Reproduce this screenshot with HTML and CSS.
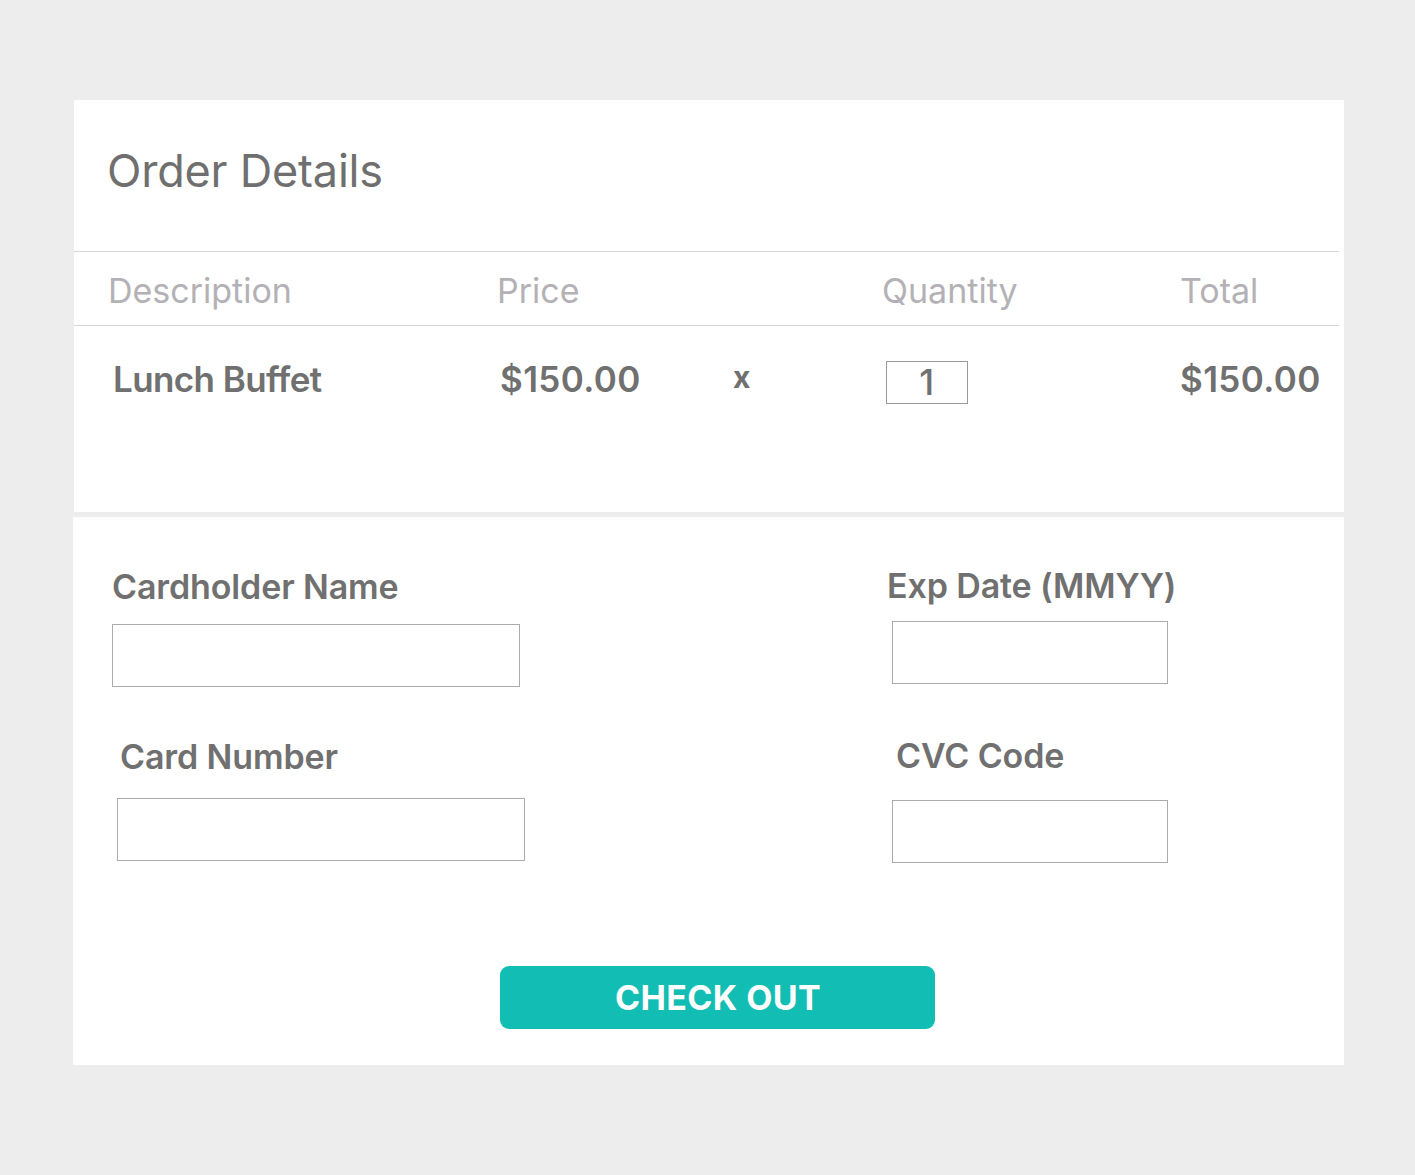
FILE: index.html
```html
<!DOCTYPE html>
<html lang="en">
<head>
<meta charset="utf-8">
<title>Order Details</title>
<link rel="stylesheet" href="styles.css">
</head>
<body>
<main class="page">
  <section class="card order">
    <div class="order-head">
      <h1 class="title">Order Details</h1>
    </div>
    <div class="table-head">
      <span class="th th-desc">Description</span>
      <span class="th th-price">Price</span>
      <span class="th th-qty">Quantity</span>
      <span class="th th-total">Total</span>
    </div>
    <div class="table-row">
      <span class="td td-desc">Lunch Buffet</span>
      <span class="td td-price">$150.00</span>
      <span class="td td-times">x</span>
      <span class="td td-qty"><span class="qty-box">1</span></span>
      <span class="td td-total">$150.00</span>
    </div>
  </section>
  <section class="card payment">
    <div class="form">
      <div class="field field-name">
        <label class="label">Cardholder Name</label>
        <div class="input"></div>
      </div>
      <div class="field field-exp">
        <label class="label">Exp Date (MMYY)</label>
        <div class="input input-short"></div>
      </div>
      <div class="field field-number">
        <label class="label">Card Number</label>
        <div class="input"></div>
      </div>
      <div class="field field-cvc">
        <label class="label">CVC Code</label>
        <div class="input input-short"></div>
      </div>
    </div>
    <button class="checkout" type="button">CHECK OUT</button>
  </section>
</main>
</body>
</html>
```

FILE: styles.css
```css
* { box-sizing: border-box; }

html, body {
  margin: 0;
  padding: 0;
  background: #ededed;
}

body {
  font-family: Inter, "Noto Sans", "Liberation Sans", sans-serif;
  color: #707070;
  width: 1415px;
  height: 1175px;
  overflow: hidden;
}

.page {
  padding-top: 100px;
  display: flex;
  flex-direction: column;
  gap: 5px;
}

.card {
  background: #ffffff;
}

.order {
  margin-left: 74px;
  width: 1270px;
  height: 412px;
}

.order-head {
  height: 152px;
  width: 1265px;
  border-bottom: 1px solid #d6d6d6;
  padding: 48px 0 0 33px;
}

.title {
  margin: 0;
  font-size: 45px;
  line-height: 46px;
  font-weight: 400;
  color: #6f6f6f;
  letter-spacing: -0.2px;
}

.table-head {
  width: 1265px;
  height: 74px;
  border-bottom: 1px solid #d6d6d6;
  padding-top: 22px;
  display: grid;
  grid-template-columns: 34px 389px 385px 298px 1fr;
}

.th {
  font-size: 34px;
  line-height: 34px;
  font-weight: 400;
  color: #b4b1b6;
}

.th-desc { grid-column: 2; }
.th-price { grid-column: 3; }
.th-qty { grid-column: 4; }
.th-total { grid-column: 5; }

.table-row {
  padding-top: 35px;
  display: grid;
  grid-template-columns: 39px 387px 233px 153px 294px 1fr;
  align-items: start;
}

.td {
  font-size: 35px;
  line-height: 36px;
  font-weight: 600;
  color: #707070;
  letter-spacing: 0.4px;
}

.td-desc {
  grid-column: 2;
  font-size: 35px;
  letter-spacing: -0.6px;
}
.td-price { grid-column: 3; }
.td-times {
  grid-column: 4;
  font-size: 30px;
  font-weight: 700;
  line-height: 30px;
  padding-top: 1px;
  letter-spacing: 0;
}
.td-qty { grid-column: 5; }
.td-total { grid-column: 6; }

.qty-box {
  display: flex;
  align-items: center;
  justify-content: center;
  width: 82px;
  height: 43px;
  border: 1px solid #9a9a9a;
  font-size: 36px;
  font-weight: 500;
  padding-bottom: 2px;
}

.payment {
  margin-left: 73px;
  width: 1271px;
  height: 548px;
  padding-top: 53px;
}

.form {
  display: grid;
  grid-template-columns: 780px 1fr;
  align-items: start;
}

.field {
  display: flex;
  flex-direction: column;
  align-items: flex-start;
}

.label {
  font-size: 34px;
  line-height: 34px;
  font-weight: 600;
  color: #707070;
  letter-spacing: -0.12px;
}

.input {
  width: 408px;
  height: 63px;
  border: 1px solid #ababab;
  background: #ffffff;
}

.input-short {
  width: 276px;
}

.field-name { margin-left: 39px; }
.field-name .input { margin-top: 20px; margin-left: 0; }

.field-exp { margin-left: 34px; margin-top: -1px; }
.field-exp .input { margin-top: 18px; margin-left: 5px; }

.field-number { margin-left: 47px; margin-top: 53px; }
.field-number .input { margin-top: 24px; margin-left: -3px; }

.field-cvc { margin-left: 43px; margin-top: 52px; }
.field-cvc .input { margin-top: 27px; margin-left: -4px; }

.checkout {
  display: block;
  margin: 103px 0 0 427px;
  width: 435px;
  height: 63px;
  border: none;
  border-radius: 9px;
  background: #12bdb3;
  color: #ffffff;
  font-family: Inter, "Noto Sans", "Liberation Sans", sans-serif;
  font-size: 34px;
  font-weight: 700;
  letter-spacing: 0.4px;
  padding: 0 0 0 1px;
}
```
